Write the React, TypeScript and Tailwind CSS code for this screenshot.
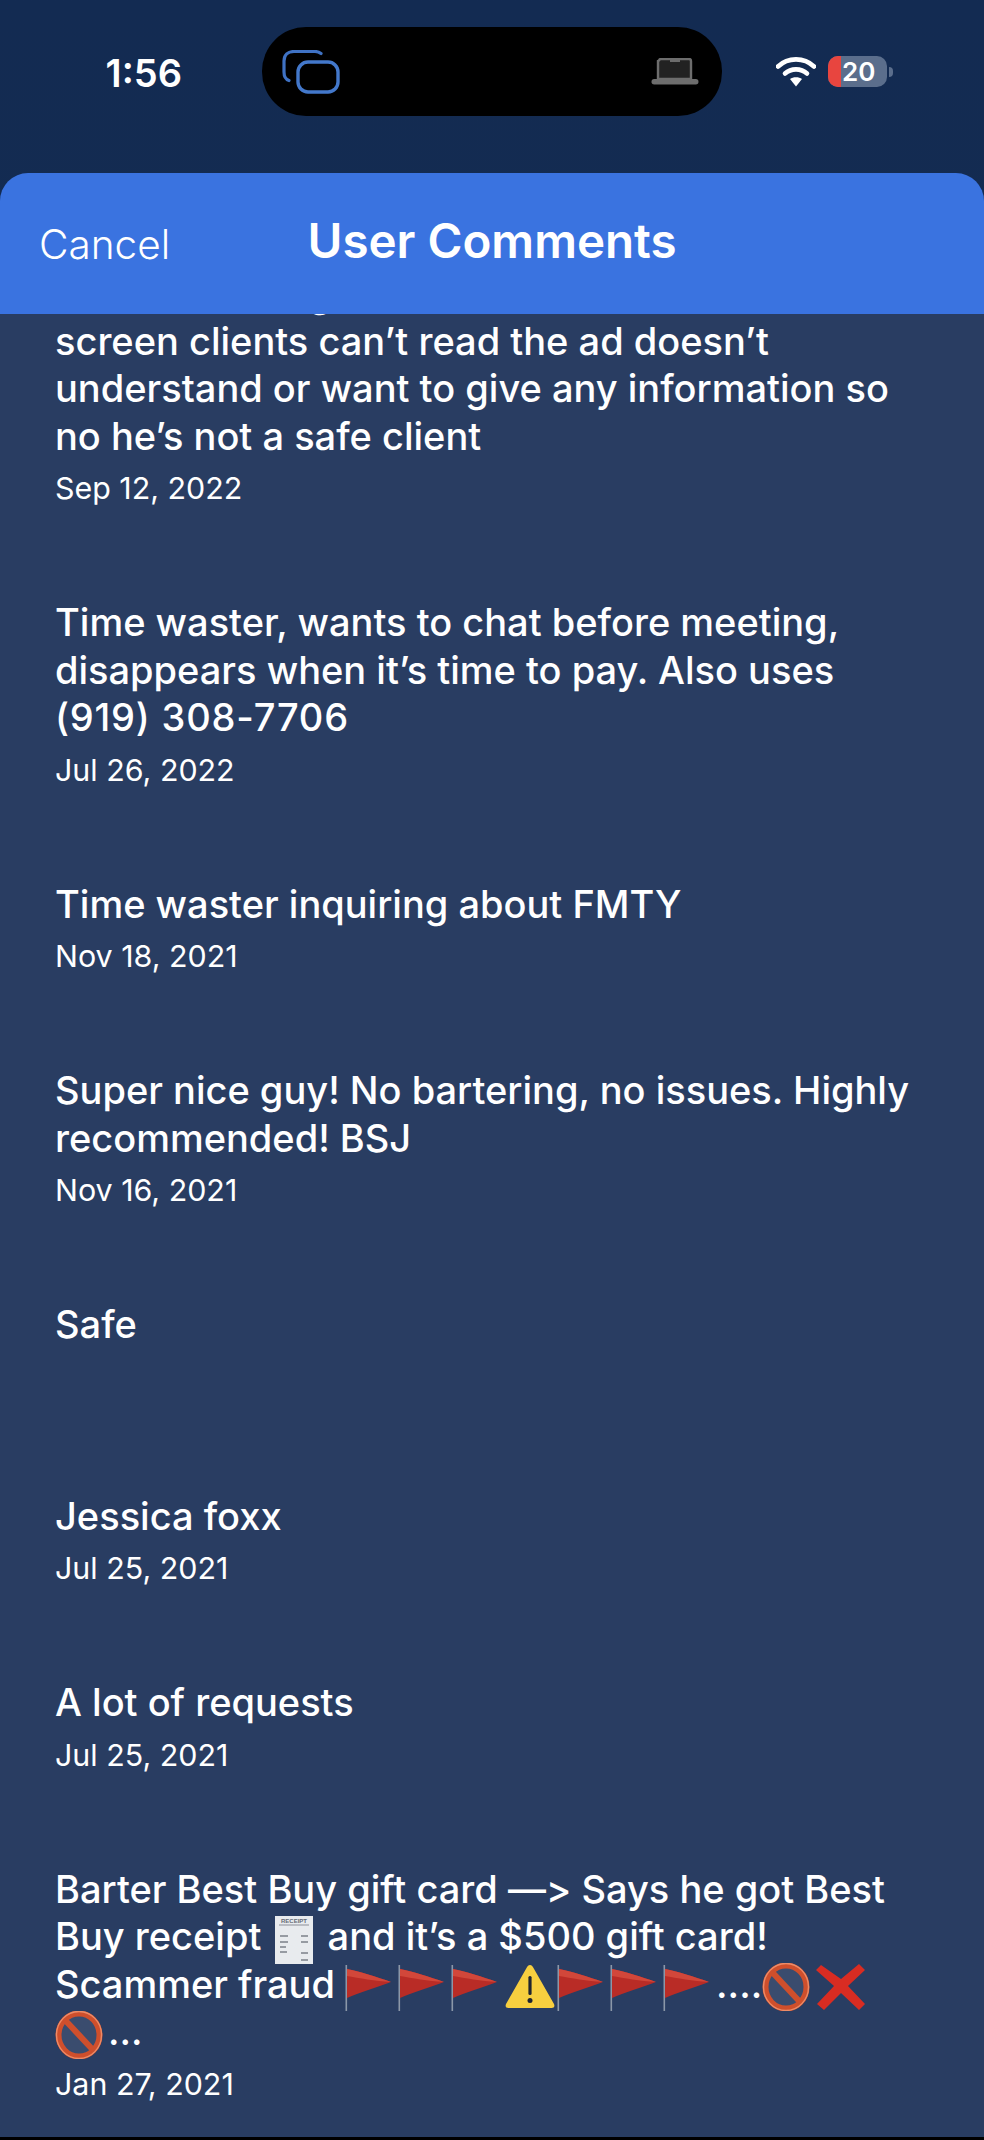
import type { ReactNode } from "react";

type Comment = {
  body: ReactNode;
  date?: string;
};

function Flag() {
  return (
    <svg viewBox="0 0 53 48" className="inline-block h-[48px] w-[53px] -my-2 align-middle" aria-hidden>
      <rect x="0.5" y="2" width="1.6" height="46" fill="#8b97a8" />
      <path d="M2 6 C14 8 32 14 46 19 C32 24 14 30 2 35 Z" fill="#b92c26" />
      <path d="M2 6 C14 8 32 14 46 19 C30 18 14 15 2 13 Z" fill="#d2473a" />
    </svg>
  );
}

function Warning() {
  return (
    <svg viewBox="0 0 53 48" className="inline-block h-[48px] w-[53px] -my-2 align-middle" aria-hidden>
      <path d="M26 2 C27.5 2 28.5 3 29.5 5 L50 41 C51 43.5 50 45 47.5 45 L4.5 45 C2 45 1 43.5 2 41 L22.5 5 C23.5 3 24.5 2 26 2 Z" fill="#f7cf3f" />
      <rect x="24.4" y="13" width="3.2" height="19" rx="1.5" fill="#1f2430" />
      <circle cx="26" cy="37.5" r="2.5" fill="#1f2430" />
    </svg>
  );
}

function Prohibited() {
  return (
    <svg viewBox="0 0 53 48" className="inline-block h-[48px] w-[53px] -my-2 align-middle" aria-hidden>
      <ellipse cx="24" cy="24" rx="20.5" ry="21.5" fill="#3a4c6e" stroke="#cf4f2c" strokeWidth="6" />
      <ellipse cx="24" cy="24" rx="22.5" ry="23.5" fill="none" stroke="#ec8c68" strokeWidth="1.4" />
      <path d="M10 9 L38 39" stroke="#cf4f2c" strokeWidth="6" />
    </svg>
  );
}

function CrossMark() {
  return (
    <svg viewBox="0 0 53 48" className="inline-block h-[48px] w-[53px] -my-2 align-middle" aria-hidden>
      <path d="M6 2 L26 16 L44 1 L50 7 L33 23 L50 41 L44 47 L26 30 L9 47 L2 41 L19 23 L1 7 Z" fill="#d92c22" />
    </svg>
  );
}

function Receipt() {
  return (
    <svg viewBox="0 0 38 48" className="mx-[4px] -my-2 inline-block h-[48px] w-[38px] align-middle" aria-hidden>
      <rect width="38" height="48" fill="#e8ebee" />
      <text x="19" y="7" textAnchor="middle" fontSize="6" fontWeight="700" fontFamily="Liberation Sans, sans-serif" fill="#666c76">
        RECEIPT
      </text>
      <rect x="4" y="8.5" width="30" height="1" fill="#8b9097" />
      <path d="M5 20h8M26 20h7M5 26h8M26 26h7M5 31h6M5 36h7M26 37h7M26 44h7" stroke="#7b8189" strokeWidth="1.4" />
    </svg>
  );
}

const comments: Comment[] = [
  {
    body: (
      <>
        He refuses to go
        <br />
        screen clients can’t read the ad doesn’t
        <br />
        understand or want to give any information so
        <br />
        no he’s not a safe client
      </>
    ),
    date: "Sep 12, 2022",
  },
  {
    body: (
      <>
        Time waster, wants to chat before meeting,
        <br />
        disappears when it’s time to pay. Also uses
        <br />
        <span className="tracking-[0.8px]">(919) 308-7706</span>
      </>
    ),
    date: "Jul 26, 2022",
  },
  { body: "Time waster inquiring about FMTY", date: "Nov 18, 2021" },
  {
    body: (
      <>
        Super nice guy! No bartering, no issues. Highly
        <br />
        recommended! BSJ
      </>
    ),
    date: "Nov 16, 2021",
  },
  { body: "Safe" },
  { body: "Jessica foxx", date: "Jul 25, 2021" },
  { body: "A lot of requests", date: "Jul 25, 2021" },
  {
    body: (
      <>
        Barter Best Buy gift card —&gt; Says he got Best
        <br />
        Buy receipt <Receipt /> and it’s a $500 gift card!
        <br />
        Scammer fraud <Flag />
        <Flag />
        <Flag />
        <Warning />
        <Flag />
        <Flag />
        <Flag />
        ....
        <Prohibited />
        <CrossMark />
        <br />
        <Prohibited />
        ...
      </>
    ),
    date: "Jan 27, 2021",
  },
];

function CommentRow({ body, date }: Comment) {
  return (
    <div>
      <div className="text-[38px] font-medium leading-[47.5px] text-white [font-feature-settings:'calt'_0]">
        {body}
      </div>
      {date ? (
        <div className="mt-[10px] h-[36px] text-[30.4px] leading-[36px] text-white">{date}</div>
      ) : (
        <div className="h-[51px]" />
      )}
    </div>
  );
}

export default function App() {
  return (
    <div className="flex h-[2140px] flex-col overflow-hidden bg-gradient-to-b from-[#132b52] to-[#162b4c] font-['Inter',sans-serif]">
      <div className="flex h-[173px] shrink-0 items-start pt-[27px]">
        <div className="flex h-[89px] w-[262px] items-center justify-end pr-[80px] pt-[2px] text-[38px] font-semibold leading-none text-white">
          1:56
        </div>
        <div className="flex h-[89px] w-[460px] items-center justify-between rounded-[44px] bg-black pl-[20px] pr-[23px]">
          <svg viewBox="0 0 58 44" className="h-[44px] w-[58px]" fill="none" aria-hidden>
            <path d="M39 3.5 C37 2 36 1.5 33 1.5 H12 C6 1.5 2 5 2 11 V22 C2 26 4 29.5 7 30.5" stroke="#3f72c4" strokeWidth="3.2" strokeLinecap="round" />
            <rect x="16" y="12" width="40" height="30" rx="10" stroke="#4378cb" strokeWidth="3.4" />
          </svg>
          <svg viewBox="0 0 48 28" className="h-[28px] w-[48px]" aria-hidden>
            <path d="M8 2.5 A2 2 0 0 1 10 1 H38 A2 2 0 0 1 40 3 V21 H7 V3 Z" fill="#222222" stroke="#6d6d6d" strokeWidth="2.4" />
            <rect x="19" y="1" width="10" height="3" fill="#6d6d6d" />
            <rect x="0.5" y="21" width="47" height="5.5" rx="2.7" fill="#6d6d6d" />
          </svg>
        </div>
        <div className="flex h-[89px] flex-1 items-center pl-[54px]">
          <svg viewBox="0 0 40 31" className="h-[31px] w-[40px]" fill="none" aria-hidden>
            <path d="M2 10.5 C12 1 28 1 38 10.5" stroke="#ffffff" strokeWidth="4.6" strokeLinecap="round" />
            <path d="M9 17.5 C15 12 25 12 31 17.5" stroke="#ffffff" strokeWidth="4.6" strokeLinecap="round" />
            <path d="M14 23 C17 20.5 23 20.5 26 23 L20 30.5 Z" fill="#ffffff" />
          </svg>
          <div className="ml-[12px] flex h-[31px] w-[59px] items-center overflow-hidden rounded-[10px] bg-[#5b6e8c]">
            <div className="h-full w-[13px] shrink-0 bg-[#e8453f]" />
            <span className="pl-[1px] text-[26px] font-semibold leading-none text-white">20</span>
          </div>
          <div className="ml-[2px] h-[10px] w-[4px] rounded-r-full bg-[#5b6e8c]" />
        </div>
      </div>

      <div className="flex min-h-0 flex-1 flex-col overflow-hidden border-b-[3px] border-black">
        <div className="z-10 grid h-[141px] shrink-0 grid-cols-[1fr_auto_1fr] items-center rounded-t-[28px] bg-[#3a73e0] px-[39px] text-white">
          <div className="pt-[3px] text-[40.5px] font-light leading-none">Cancel</div>
          <div className="pb-[5px] text-[47.5px] font-semibold leading-none">User Comments</div>
          <div />
        </div>
        <div className="min-h-0 flex-1 overflow-hidden bg-[#293d62] pl-[55px] pr-[40px]">
          <div className="-mt-[44px] flex flex-col gap-[93px]">
            {comments.map((c, i) => (
              <CommentRow key={i} body={c.body} date={c.date} />
            ))}
          </div>
        </div>
      </div>
    </div>
  );
}
